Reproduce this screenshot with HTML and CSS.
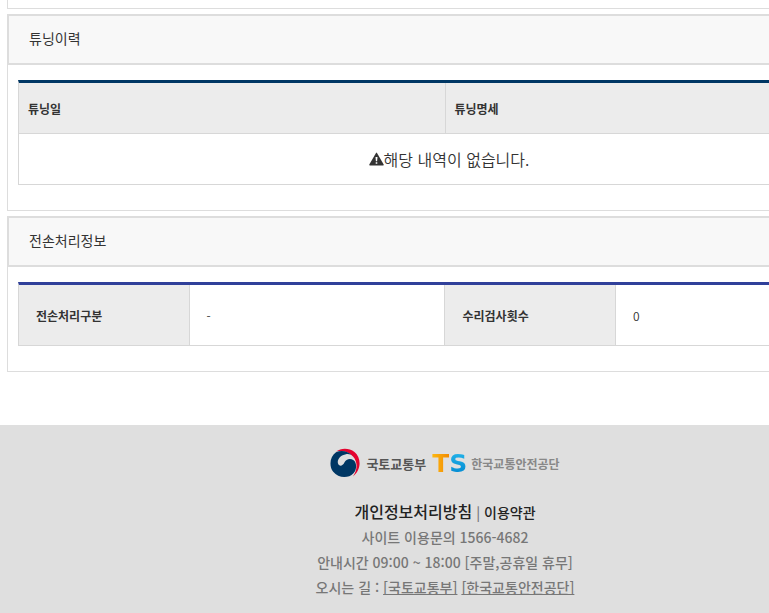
FILE: index.html
```
<!DOCTYPE html>
<html lang="ko">
<head>
<meta charset="UTF-8" />
<title>튜닝이력</title>
<link rel="stylesheet" href="styles.css">
</head>
<body>
<main class="content">
  <div class="panel-end"></div>

  <section class="panel">
    <h2 class="panel-title">튜닝이력</h2>
    <div class="panel-body">
      <table class="list">
        <thead>
          <tr><th scope="col">튜닝일</th><th scope="col">튜닝명세</th></tr>
        </thead>
        <tbody>
          <tr>
            <td class="empty" colspan="2">
              <div class="notice">
                <svg class="warn" viewBox="0 0 15 14" aria-hidden="true">
                  <path d="M7 1Q7.5.2 8 1L14.700 12.500Q15 13.400 14 13.400H1Q0 13.400.3 12.500Z" fill="#333"/>
                  <path d="M6.500 5h2l-.4 4.200H6.900zM6.700 10.200h1.600v1.600H6.700z" fill="#fff"/>
                </svg>
                <span>해당 내역이 없습니다.</span>
              </div>
            </td>
          </tr>
        </tbody>
      </table>
    </div>
  </section>

  <section class="panel">
    <h2 class="panel-title">전손처리정보</h2>
    <div class="panel-body">
      <table class="detail">
        <tbody>
          <tr>
            <th scope="row">전손처리구분</th><td>-</td>
            <th scope="row">수리검사횟수</th><td>0</td>
          </tr>
        </tbody>
      </table>
    </div>
  </section>
</main>

<footer class="footer">
  <div class="logos">
    <svg class="emblem" viewBox="0 0 30 30" aria-hidden="true">
      <path d="M6 3.500C11-.3 19-.5 24.500 4C31.500 10 31.500 21.500 23 28.500C27.500 22 28 14 23 8.500C18.500 3.500 12 2.200 6 3.500Z" fill="#e4032e"/>
      <path d="M6 4.200C-.2 8.500-1.300 18 3.200 23.700C8.200 30 18 31 23.500 25.200C27.200 21 26.800 14.500 23.600 12.200C20 9.800 16 11.200 14.400 14.500C12.500 18.500 9 18.500 8 15.500C6.800 11.500 10.500 7 16 6.200C19 5.800 21 6.500 22.500 8C18.500 3.300 11.500 1.800 6 4.200Z" fill="#003764"/>
    </svg>
    <span class="ministry">국토교통부</span>
    <span class="ts"><span class="ts-t">T</span><span class="ts-s">S</span></span>
    <span class="agency">한국교통안전공단</span>
  </div>
  <p class="policy"><a class="privacy" href="#">개인정보처리방침</a> | <a class="terms" href="#">이용약관</a></p>
  <p>사이트 이용문의 1566-4682</p>
  <p>안내시간 09:00 ~ 18:00 [주말,공휴일 휴무]</p>
  <p>오시는 길 : <a class="map" href="#">[국토교통부]</a> <a class="map" href="#">[한국교통안전공단]</a></p>
</footer>
</body>
</html>
```
FILE: styles.css
```
* { box-sizing:border-box; }
html { overflow:hidden; }
body { margin:0; min-width:890px; background:#fff; color:#333; font-family:"Noto Sans CJK KR", sans-serif; font-size:14px; }

.content { padding:0 7px; }
.panel-end { height:9px; border:1px solid #ddd; border-top:none; }
.panel { margin-top:5px; }
.panel-title { margin:0; padding:12px 20px 14px; border:2px solid #ddd; background:#f8f8f8; font-size:14px; font-weight:400; line-height:21px; }
.panel-body { padding:15px 10px 25px; border:1px solid #ddd; border-top:none; }

table { width:100%; border-collapse:separate; border-spacing:0; table-layout:fixed; border-left:1px solid #d7d7d7; }
th, td { border-right:1px solid #d7d7d7; border-bottom:1px solid #d7d7d7; text-align:left; }
th { background:#ececec; font-size:12px; font-weight:700; }
.list { border-top:3px solid #003764; }
.list th { height:51px; padding:0 9px; }
.list .empty { height:51px; padding:0; font-size:16px; font-weight:350; }
.notice { display:flex; justify-content:center; align-items:center; padding-left:8px; }
.warn { width:15px; height:14px; }

.detail { border-top:3px solid #30409a; }
.detail th { width:20%; height:61px; padding:0 17px; }
.detail td { width:30%; padding:0 17px; font-size:12px; font-weight:350; }

.footer { margin-top:53px; padding:23px 0 15px; background:#dfdfdf; color:#777; font-weight:500; text-align:center; line-height:25px; }
.footer p { margin:0; }
.footer a { color:#222; text-decoration:none; }
.footer a.map { color:#777; text-decoration:underline; }
.footer .privacy { font-size:16px; }
.logos { display:flex; justify-content:center; align-items:center; height:30px; margin-bottom:21px; }
.emblem { width:30px; height:30px; margin-right:6px; }
.ministry { margin-right:6px; color:#555; font-size:13px; font-weight:700; }
.ts { display:flex; margin-right:4px; font-family:"DejaVu Sans", sans-serif; font-size:25px; font-weight:700; }
.ts-t { background:linear-gradient(to right, #fdb913, #f28a00); background-clip:text; -webkit-background-clip:text; color:transparent; }
.ts-s { background:linear-gradient(to bottom, #25b5ea, #0087d0); background-clip:text; -webkit-background-clip:text; color:transparent; }
.agency { color:#888; font-size:12px; font-weight:700; }
```
